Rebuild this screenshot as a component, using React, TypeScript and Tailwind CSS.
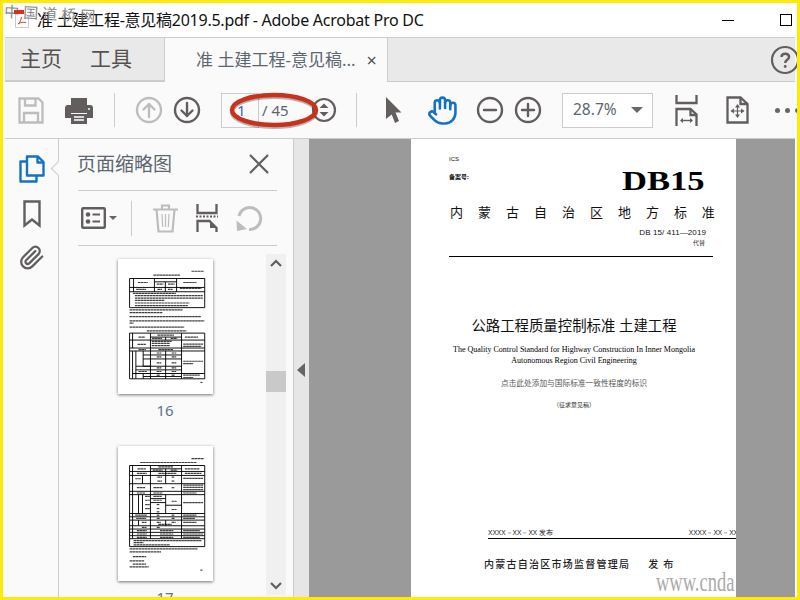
import React from "react";
import { Hand } from "lucide-react";

const G = "#625e5e";
const L = "#bdbdbd";

function Circ({ d, color = G }: { d: string; color?: string }) {
  return (
    <svg width="28" height="28" viewBox="0 0 28 28" fill="none" stroke={color} strokeWidth="2.4" strokeLinecap="round" strokeLinejoin="round" className="shrink-0">
      <circle cx="14" cy="14" r="12" />
      <path d={d} />
    </svg>
  );
}

function ThumbText({ lines }: { lines: [number, number, number][] }) {
  return (
    <>
      {lines.map(([x, y, w], i) => (
        <line key={i} x1={x} y1={y} x2={x + w} y2={y} stroke="#000" strokeOpacity="0.75" strokeWidth="3.6" strokeDasharray="8 1" />
      ))}
    </>
  );
}

function Grid({ segs }: { segs: [number, number, number, number][] }) {
  return (
    <>
      {segs.map(([a, b, c, d], i) => (
        <line key={i} x1={a} y1={b} x2={c} y2={d} stroke="#000" strokeWidth="2.8" />
      ))}
    </>
  );
}

function Thumb16() {
  const g: [number, number, number, number][] = [
    [88, 85, 315, 85], [88, 112, 315, 112], [88, 125, 315, 125], [88, 173, 315, 173], [88, 85, 88, 173], [315, 85, 315, 173],
    [100, 85, 100, 125], [163, 85, 163, 125], [230, 85, 230, 125], [196, 95, 196, 125], [163, 95, 230, 95],
    [88, 250, 315, 250], [88, 388, 315, 388], [88, 250, 88, 388], [315, 250, 315, 388],
    [88, 271, 315, 271], [88, 295, 315, 295], [88, 304, 315, 304], [97, 250, 97, 295], [151, 250, 151, 388], [245, 250, 245, 388],
    [151, 262, 245, 262], [197, 262, 197, 271], [197, 304, 197, 388],
    [97, 304, 97, 388], [107, 304, 107, 388], [129, 304, 129, 350], [107, 350, 151, 350],
    [129, 316, 245, 316], [129, 328, 245, 328], [129, 350, 245, 350], [107, 361, 245, 361], [97, 372, 315, 372], [129, 372, 129, 388], [129, 381, 245, 381],
  ];
  const t: [number, number, number][] = [
    [275, 63, 38], [160, 75, 80], [113, 97, 30], [170, 102, 20], [204, 102, 20], [250, 97, 40], [172, 118, 14], [204, 118, 14], [240, 115, 65], [108, 118, 30],
    [98, 130, 130], [104, 137, 205], [104, 144, 205], [104, 151, 90], [104, 159, 165], [104, 167, 160],
    [88, 180, 160], [88, 188, 100], [88, 200, 215], [88, 213, 226], [88, 220, 12], [88, 232, 165], [140, 243, 120],
    [115, 262, 20], [172, 256, 50], [156, 266, 30], [212, 266, 20], [255, 262, 40], [112, 284, 25], [155, 275, 60], [155, 281, 55], [155, 288, 55], [250, 283, 60], [250, 290, 55],
    [115, 300, 22], [175, 300, 45], [170, 310, 14], [215, 310, 14], [170, 322, 14], [215, 322, 14], [170, 340, 14], [215, 340, 14], [170, 355, 14], [215, 355, 14], [250, 335, 60], [250, 342, 30], [115, 366, 25], [170, 366, 14], [215, 366, 14], [250, 377, 50], [250, 384, 30], [170, 377, 10], [215, 377, 10], [302, 399, 6],
  ];
  return (
    <svg width="95" height="135" viewBox="53 27 287 406" className="block">
      <ThumbText lines={t} />
      <Grid segs={g} />
    </svg>
  );
}

function Thumb17() {
  const g: [number, number, number, number][] = [
    [88, 120, 315, 120], [88, 138, 315, 138], [88, 150, 315, 150], [88, 175, 315, 175], [88, 198, 315, 198], [88, 208, 315, 208], [88, 265, 315, 265], [88, 275, 315, 275], [88, 285, 315, 285], [88, 302, 315, 302], [88, 312, 315, 312], [88, 322, 315, 322], [88, 332, 315, 332], [88, 341, 315, 341], [88, 365, 315, 365],
    [88, 120, 88, 365], [315, 120, 315, 365], [97, 120, 97, 341], [151, 120, 151, 341], [245, 120, 245, 341],
    [197, 130, 197, 175], [151, 130, 245, 130], [127, 150, 127, 175], [115, 208, 115, 265], [127, 208, 127, 265], [151, 220, 197, 220], [151, 232, 197, 232], [197, 208, 197, 265], [115, 285, 115, 302], [197, 285, 197, 302], [197, 240, 245, 240],
  ];
  const t: [number, number, number][] = [
    [275, 99, 38], [120, 111, 170], [112, 130, 25], [175, 124, 45], [158, 134, 30], [212, 134, 20], [255, 130, 45], [110, 144, 30], [175, 144, 55], [255, 144, 50],
    [172, 155, 14], [215, 155, 8], [105, 160, 18], [250, 159, 60], [172, 167, 14], [215, 167, 8], [110, 187, 25], [160, 187, 28], [215, 187, 8], [250, 179, 60], [250, 186, 60], [250, 193, 60], [110, 203, 25], [160, 203, 28], [250, 203, 40],
    [135, 213, 14], [160, 213, 25], [160, 225, 25], [135, 225, 14], [135, 238, 14], [170, 238, 8], [135, 250, 14], [170, 250, 8], [170, 260, 8], [215, 228, 15], [215, 253, 15], [250, 232, 60],
    [105, 270, 35], [170, 270, 8], [215, 270, 8], [250, 270, 40], [108, 280, 30], [170, 280, 10], [215, 280, 10], [250, 280, 35], [125, 292, 14], [170, 292, 12], [215, 292, 12], [250, 292, 40], [125, 307, 14], [175, 298, 40], [110, 317, 30], [170, 307, 10],
    [110, 327, 30], [180, 317, 40], [250, 317, 50], [180, 327, 40], [250, 327, 60], [110, 337, 30], [180, 337, 40], [250, 337, 50], [100, 347, 205], [100, 353, 30], [100, 360, 110],
    [88, 372, 205], [88, 381, 95], [98, 395, 40], [88, 408, 45], [98, 418, 40], [88, 426, 58], [302, 436, 6],
  ];
  return (
    <svg width="95" height="135" viewBox="53 62 287 406" className="block">
      <ThumbText lines={t} />
      <Grid segs={g} />
    </svg>
  );
}

export default function App() {
  return (
    <div className="relative w-[800px] h-[600px] overflow-hidden bg-[#ffe80a] p-[3px] font-['Noto_Sans','Noto_Sans_CJK_SC',sans-serif]">
      <div className="flex h-[594px] flex-col overflow-hidden bg-white px-[2px]">
        {/* title bar */}
        <div className="flex h-[34px] shrink-0 items-center">
          <svg width="16" height="18" viewBox="0 0 16 18" className="ml-[9px] shrink-0">
            <path d="M1.5 1.5h9l4 4v11h-13z" fill="#fff" stroke="#c9c9c9" />
            <path d="M4 13c2-1 3-4 3.5-7M4 13c3-2 5-2 8-1.500" fill="none" stroke="#d2442a" strokeWidth="1" />
          </svg>
          <span className="ml-[7px] whitespace-nowrap text-[16px] leading-none tracking-[-0.25px] text-[#111]">准 土建工程-意见稿2019.5.pdf - Adobe Acrobat Pro DC</span>
          <span className="ml-auto h-px w-3 bg-black" />
          <span className="ml-[46px] mr-[3px] h-3 w-3 border border-black" />
        </div>
        {/* tab bar */}
        <div className="flex h-[45px] shrink-0 border-y border-[#cccccc] bg-[#e9e9e9]">
          <div className="flex w-[159px] shrink-0 items-center border-b border-[#cccccc] pl-[15px] text-[21px] text-[#55514f]">
            <span>主页</span>
            <span className="ml-[28px]">工具</span>
          </div>
          <div className="-mb-px flex w-[224px] shrink-0 items-center border-r border-l border-[#cccccc] bg-[#fafafa] pl-[31px] text-[17px] text-[#5c6670]">
            <span className="whitespace-nowrap">准 土建工程-意见稿...</span>
            <span className="ml-[11px] text-[18px] leading-none text-[#555]">×</span>
          </div>
          <div className="ml-auto mr-[-5px] flex items-center">
            <svg width="30" height="30" viewBox="0 0 30 30" fill="none" stroke={G} strokeWidth="2.2">
              <circle cx="15" cy="15" r="13" />
              <path d="M11.500 12c0-4.500 7.500-4.500 7.500 0 0 3-3.800 2.700-3.800 6" strokeWidth="2.500" />
              <circle cx="15.200" cy="21.500" r="1.400" fill={G} stroke="none" />
            </svg>
          </div>
        </div>
        {/* toolbar */}
        <div className="flex h-[57px] shrink-0 items-center border-b border-[#cccccc] bg-[#fafafa]">
          <svg width="26" height="27" viewBox="0 0 26 27" fill="none" stroke={L} strokeWidth="2.300" className="ml-[13px] shrink-0">
            <path d="M1.500 1.500h19l4 4v20h-23z" />
            <path d="M7 2v6.500h10.500V2M6 25v-9h14v9" />
          </svg>
          <svg width="28" height="27" viewBox="0 0 28 27" className="ml-[21px] shrink-0" fill={G}>
            <path d="M6 1h16v7H6z" />
            <path d="M3 8h22a3 3 0 0 1 3 3v10h-6v-5H6v5H0V11a3 3 0 0 1 3-3z" />
            <path d="M6 17h16v10H6z" />
            <path d="M9 20h10M9 23h10" stroke="#fff" strokeWidth="1.500" />
            <circle cx="24" cy="12" r="1" fill="#fff" />
          </svg>
          <span className="ml-[21px] h-[34px] w-px shrink-0 bg-[#cccccc]" />
          <span className="ml-[20px] flex"><Circ color={L} d="M14 21V8M8.500 13.500 14 8l5.500 5.500" /></span>
          <span className="ml-[10px] flex"><Circ d="M14 7v13M8.500 14.500 14 20l5.500-5.500" /></span>
          <span className="ml-[20px] flex h-[35px] w-[38px] shrink-0 items-center border border-[#cccccc] pl-[15px] text-[15px] text-[#2f6fad]">1</span>
          <span className="ml-[3px] w-[49px] shrink-0 text-[15px] text-[#5c6670]">/ 45</span>
          <svg width="26" height="26" viewBox="0 0 26 26" fill={G} stroke={G} strokeWidth="2.200" className="shrink-0">
            <circle cx="13" cy="13" r="11" fill="none" />
            <path d="M8.500 11 13 6.500l4.500 4.500zM8.500 15l4.500 4.500 4.500-4.500z" stroke="none" />
          </svg>
          <span className="ml-[19px] h-[34px] w-px shrink-0 bg-[#cccccc]" />
          <svg width="16" height="27" viewBox="0 0 16 27" fill={G} className="ml-[29px] shrink-0">
            <path d="M0 0 15.500 15.500H9.500L13 24l-4 2-3.300-8.500L0 22z" />
          </svg>
          <Hand size={31} strokeWidth={2} color="#1272c5" className="ml-[25px] shrink-0" />
          <span className="ml-[18px] flex"><Circ d="M8 14h12" /></span>
          <span className="ml-[10px] flex"><Circ d="M8 14h12M14 8v12" /></span>
          <div className="ml-[20px] flex h-[35px] w-[91px] shrink-0 items-center justify-between border border-[#cccccc] bg-white pr-[9px] pl-[10px] text-[15.5px] text-[#5c6670]">
            <span>28.7%</span>
            <span className="h-0 w-0 border-x-[6px] border-t-[6px] border-x-transparent border-t-[#6a6666]" />
          </div>
          <svg width="23" height="31" viewBox="0 0 23 31" fill="none" stroke={G} strokeWidth="2.300" className="ml-[22px] shrink-0">
            <path d="M1.500 0v8h20V0M1.500 31V14h14l6 5.500V31" />
            <path d="M15.500 14v6h6" />
            <path d="M6 25.500h11" strokeWidth="1.400" />
            <path d="M8 23l-3 2.500L8 28zM15 23l3 2.500-3 2.500z" fill={G} stroke="none" />
          </svg>
          <svg width="23" height="28" viewBox="0 0 23 28" fill="none" stroke={G} strokeWidth="2.300" className="ml-[28px] shrink-0">
            <path d="M1.500 1.500h13l7 6.500v18.500h-20z" />
            <path d="M14.500 1.500V8h7" />
            <path d="M11.500 9v12M5.500 15h12" strokeWidth="1.200" />
            <path d="M9 11.500 11.500 8 14 11.500zM9 18.500l2.500 3.500 2.500-3.500zM8 12.500 4.500 15 8 17.500zM15 12.500l3.500 2.500-3.500 2.500z" fill={G} stroke="none" />
          </svg>
          <span className="ml-[26px] flex shrink-0 gap-[5px]">
            <span className="h-[5px] w-[5px] rounded-full bg-[#6a6666]" />
            <span className="h-[5px] w-[5px] rounded-full bg-[#6a6666]" />
            <span className="h-[5px] w-[5px] rounded-full bg-[#6a6666]" />
          </span>
        </div>
        {/* body */}
        <div className="flex min-h-0 flex-1">
          {/* rail */}
          <div className="relative flex w-[54px] shrink-0 flex-col items-center border-r border-[#cccccc] bg-[#fafafa] pt-[16px]">
            <svg width="26" height="28" viewBox="0 0 26 28" fill="none" stroke="#1572c2" strokeWidth="2.400" strokeLinejoin="round" className="shrink-0">
              <path d="M8 20.500V1.500h11l5.500 5.500v13.500z" />
              <path d="M18.500 2v5.500h6" />
              <path d="M8 6.500H1.500v20h16v-6" />
            </svg>
            <svg width="18" height="28" viewBox="0 0 18 28" fill="none" stroke={G} strokeWidth="2.400" className="mt-[17px] shrink-0">
              <path d="M1.500 1.500h15v24L9 19.500l-7.500 6z" />
            </svg>
            <svg width="26" height="29" viewBox="0 0 24 24" fill="none" stroke={G} strokeWidth="2.100" strokeLinecap="round" strokeLinejoin="round" className="mt-[15px] shrink-0">
              <path d="m21.440 11.050-9.190 9.190a6 6 0 0 1-8.490-8.490l8.570-8.570A4 4 0 1 1 18 8.840l-8.590 8.570a2 2 0 0 1-2.830-2.830l8.490-8.480" />
            </svg>
            <span className="absolute top-[24px] right-[-6px] h-[11px] w-[11px] rotate-45 border-b border-l border-[#cccccc] bg-[#fafafa]" />
          </div>
          {/* thumbnails panel */}
          <div className="flex w-[234px] shrink-0 flex-col bg-[#fafafa] pl-[19px]">
            <div className="flex h-[52px] w-[199px] shrink-0 items-center justify-between border-b border-[#cccccc] pr-[8px] text-[19px] text-[#5c6670]">
              <span className="-ml-px whitespace-nowrap">页面缩略图</span>
              <svg width="20" height="20" viewBox="0 0 20 20" stroke={G} strokeWidth="2.200" className="-mt-[2px]"><path d="M1 1l18 18M19 1 1 19" /></svg>
            </div>
            <div className="flex h-[55px] w-[199px] shrink-0 items-center border-b border-[#cccccc]">
              <svg width="25" height="22" viewBox="0 0 25 22" fill="none" stroke={G} strokeWidth="2.400" className="ml-[3px] shrink-0">
                <rect x="1.200" y="1.200" width="22.600" height="19.600" rx="1" />
                <circle cx="7" cy="7.500" r="2.300" fill={G} stroke="none" />
                <circle cx="7" cy="14.500" r="2.300" fill={G} stroke="none" />
                <path d="M11.500 7.500H19M11.500 14.500H19" strokeWidth="2" />
              </svg>
              <span className="ml-[3px] h-0 w-0 border-x-[4px] border-t-[4px] border-x-transparent border-t-[#6a6666]" />
              <span className="ml-[14px] h-[35px] w-px shrink-0 bg-[#cccccc]" />
              <svg width="25" height="29" viewBox="0 0 25 29" fill="none" stroke={L} strokeWidth="2.200" className="ml-[21px] shrink-0">
                <path d="M0 5.500h25M3.500 5.500l2 22h14l2-22M9 5V1.500h7V5" />
                <path d="M9 10l.7 13M12.500 10v13M16 10l-.7 13" strokeWidth="1.200" />
              </svg>
              <svg width="22" height="28" viewBox="0 0 22 28" fill="none" stroke={G} strokeWidth="2.300" className="ml-[18px] shrink-0">
                <path d="M1.500 0v9h19V0M1.500 28V17h12l7 7v4" />
                <path d="M0 12.500h22" strokeWidth="2" strokeDasharray="2 1.500" />
                <path d="M14 17v7h6.500z" fill={G} stroke="none" />
              </svg>
              <svg width="27" height="27" viewBox="0 0 27 27" fill="none" stroke={L} strokeWidth="3" className="ml-[18px] shrink-0">
                <path d="M13 24.500A11 11 0 1 0 3 11" />
                <path d="M0.500 15.500 11 24 1 26z" fill={L} stroke="none" />
              </svg>
            </div>
            <div className="flex min-h-0 flex-1">
              <div className="flex w-[188px] shrink-0 flex-col items-center pt-[13px] pr-[14px]">
                <div className="bg-white shadow-[0_1px_3px_rgba(0,0,0,0.55)]"><Thumb16 /></div>
                <div className="mt-[6px] text-[15px] leading-[20px] text-[#5d7488]">16</div>
                <div className="mt-[26px] bg-white shadow-[0_1px_3px_rgba(0,0,0,0.55)]"><Thumb17 /></div>
                <div className="mt-[6px] text-[15px] leading-[20px] text-[#5d7488]">17</div>
              </div>
              <div className="mt-[8px] mb-[2px] flex w-[20px] shrink-0 flex-col bg-[#f0f0f0]">
                <svg width="20" height="18" viewBox="0 0 20 18" fill="none" stroke={G} strokeWidth="2.200" className="shrink-0"><path d="M5 12l5-5 5 5" /></svg>
                <div className="mt-[99px] h-[21px] shrink-0 bg-[#c9c9c9]" />
                <svg width="20" height="18" viewBox="0 0 20 18" fill="none" stroke={G} strokeWidth="2.200" className="mt-auto shrink-0"><path d="M5 6l5 5 5-5" /></svg>
              </div>
            </div>
          </div>
          {/* splitter */}
          <div className="flex w-[16px] shrink-0 items-center border-l border-[#cccccc] bg-[#e6e6e6] pt-[4px]">
            <span className="ml-[3px] h-0 w-0 border-y-[7px] border-r-[8px] border-y-transparent border-r-[#666]" />
          </div>
          {/* document view */}
          <div className="flex min-w-0 flex-1 bg-[#9a9a9a] pl-[102px]">
            <div className="relative flex h-full w-[325px] shrink-0 flex-col overflow-hidden bg-white pr-[23px] pl-[38px] text-[#111]">
              <div className="mt-[17px] font-['Liberation_Sans',sans-serif] text-[6px] leading-[7px]">ICS</div>
              <div className="mt-[11px] flex h-[20px] items-start justify-between">
                <span className="text-[6px] font-bold leading-[7px]">备案号:</span>
                <span className="mr-[8px] -mt-[5px] origin-right scale-x-[1.28] font-['Liberation_Serif',serif] text-[27px] font-bold leading-[24px] text-black">DB15</span>
              </div>
              <div className="mt-[9px] -mr-[2px] flex h-[18px] items-center justify-between pl-[1px] text-[13px] leading-none">
                {"内蒙古自治区地方标准".split("").map((c, i) => <span key={i}>{c}</span>)}
              </div>
              <div className="mt-[6px] text-right pr-[7px] font-['Liberation_Sans',sans-serif] text-[8px] leading-[12px] tracking-[0.1px]">DB 15/ 411—2019</div>
              <div className="-mt-px text-right pr-[8px] text-[6px] leading-[10px] text-[#333]">代替</div>
              <div className="mt-[8px] h-px shrink-0 bg-black" />
              <div className="mt-[59px] pr-[14px] text-center text-[14.4px] leading-[20px]">公路工程质量控制标准 土建工程</div>
              <div className="mt-[8px] whitespace-nowrap pr-[14px] text-center font-['Liberation_Serif',serif] text-[8px] font-normal leading-[11px] text-black">The Quality Control Standard for Highway Construction In Inner Mongolia<br />Autonomous Region Civil Engineering</div>
              <div className="mt-[11px] pr-[14px] text-center text-[7.7px] leading-[12px] text-[#555]">点击此处添加与国际标准一致性程度的标识</div>
              <div className="mt-[11px] pr-[14px] text-center text-[6px] leading-[10px] text-[#333]">（征求意见稿）</div>
              <div className="mt-[118px] -mr-[23px] ml-[39px] flex h-[10px] items-center justify-between whitespace-nowrap font-['Liberation_Sans',sans-serif] text-[6.6px] leading-none">
                <span>XXXX－XX－XX 发布</span>
                <span className="-mr-[2px]">XXXX－XX－XX</span>
              </div>
              <div className="-mr-[23px] ml-[39px] h-px shrink-0 bg-black" />
              <div className="mt-[19px] ml-[35px] flex h-[12px] items-center whitespace-nowrap text-[10px] font-medium leading-none tracking-[1.250px] text-[#222]">
                <span>内蒙古自治区市场监督管理局</span>
                <span className="ml-[18px] tracking-[5px]">发布</span>
              </div>
            </div>
          </div>
        </div>
      </div>
      {/* overlays */}
      <svg width="100" height="42" viewBox="0 0 100 42" fill="none" className="absolute top-[90px] left-[225px]">
        <ellipse cx="49" cy="22" rx="42" ry="15" stroke="#333" strokeOpacity="0.35" strokeWidth="4" />
        <ellipse cx="49" cy="20" rx="42" ry="15" stroke="#c8321c" strokeWidth="4.500" />
      </svg>
      <div className="absolute top-[-1px] left-[5px] rotate-[3deg] origin-top-left whitespace-nowrap font-['Noto_Sans_CJK_SC',sans-serif] text-[15px] leading-[24px] tracking-[4px] text-[#888]">中国道桥网</div>
      <div className="absolute top-[10px] left-[14px] h-[4px] w-[10px] bg-[#d8301c]" />
      <div className="absolute top-[567px] left-[656px] origin-left scale-x-[0.66] whitespace-nowrap font-['Liberation_Serif',serif] text-[28px] leading-[30px] text-[#aaa]">www.cnda</div>
    </div>
  );
}
